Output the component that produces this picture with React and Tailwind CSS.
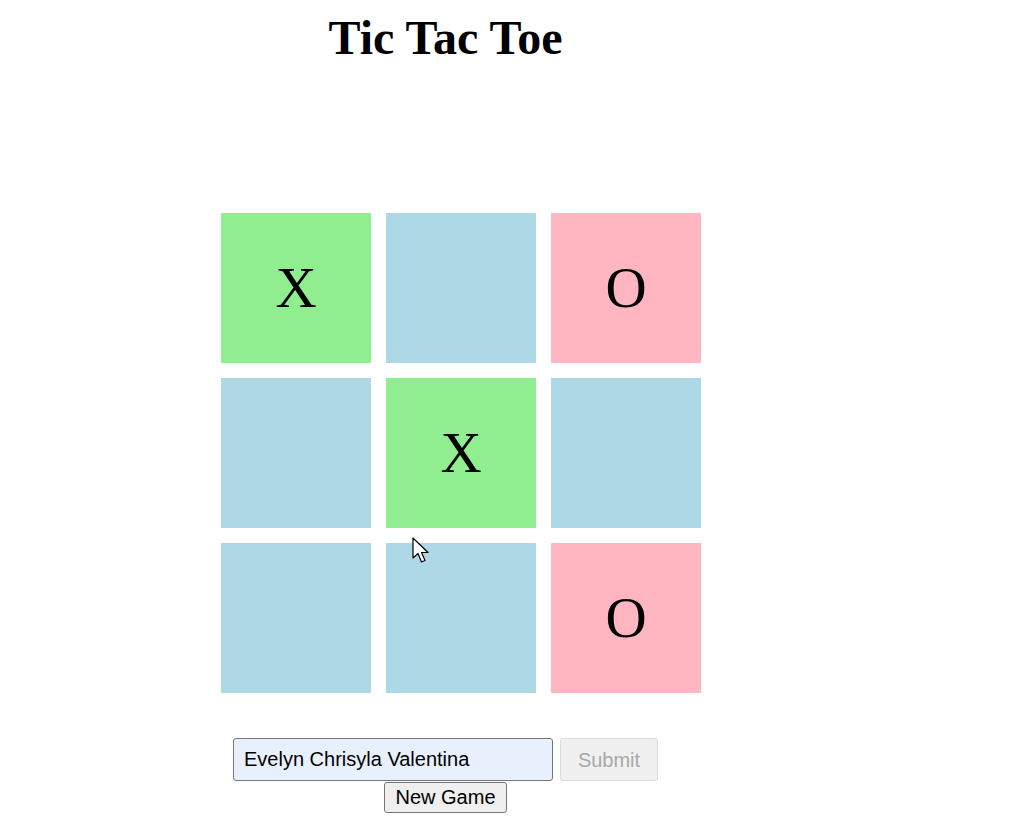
import React from 'react';

const board = ['X', '', 'O', '', 'X', '', '', '', 'O'];

function cellColor(v) {
  if (v === 'X') return 'bg-[#90ee90]';
  if (v === 'O') return 'bg-[#ffb6c1]';
  return 'bg-[#add8e6]';
}

export default function App() {
  return (
    <div className="relative w-[1020px] h-[818px] bg-white overflow-hidden">
      <div className="w-[891px] flex flex-col items-center">
        <h1 className="mt-[8px] text-[48px] leading-[60px] font-bold text-black [font-family:'Liberation_Serif',serif]">
          Tic Tac Toe
        </h1>

        {/* board */}
        <div className="mt-[145px] pl-[31px]">
          <div className="grid grid-cols-[repeat(3,150px)] gap-[15px]">
            {board.map((v, i) => (
              <div
                key={i}
                className={`w-[150px] h-[150px] flex items-center justify-center text-[57px] text-black [font-family:'Liberation_Serif',serif] ${cellColor(v)}`}
              >
                {v}
              </div>
            ))}
          </div>
        </div>

        {/* name form */}
        <div className="mt-[45px] flex items-center gap-[7px] [font-family:'Liberation_Sans',Arial,sans-serif]">
          <input
            readOnly
            value="Evelyn Chrisyla Valentina"
            className="w-[320px] h-[43px] px-[10px] text-[20px] text-black bg-[#e8f0fe] border border-[#767676] rounded-[3px] outline-none"
          />
          <button
            disabled
            className="w-[98px] h-[43px] text-[20px] text-[#a8a8a8] bg-[#f0f0f0] border border-[#dcdcdc] rounded-[3px]"
          >
            Submit
          </button>
        </div>
        <button className="mt-[1px] w-[123px] h-[31px] text-[20px] leading-[23px] text-black bg-[#efefef] border border-[#767676] rounded-[3px] [font-family:'Liberation_Sans',Arial,sans-serif]">
          New Game
        </button>
      </div>

      {/* mouse pointer */}
      <svg className="absolute left-[412px] top-[537px]" width="20" height="28" viewBox="0 0 20 28">
        <path d="M1 1 L1 21 L6 16.5 L9.5 25 L13 23.5 L9.5 15.5 L16 15.5 Z" fill="#fff" stroke="#000" strokeWidth="1.2" strokeLinejoin="round" />
      </svg>
    </div>
  );
}
